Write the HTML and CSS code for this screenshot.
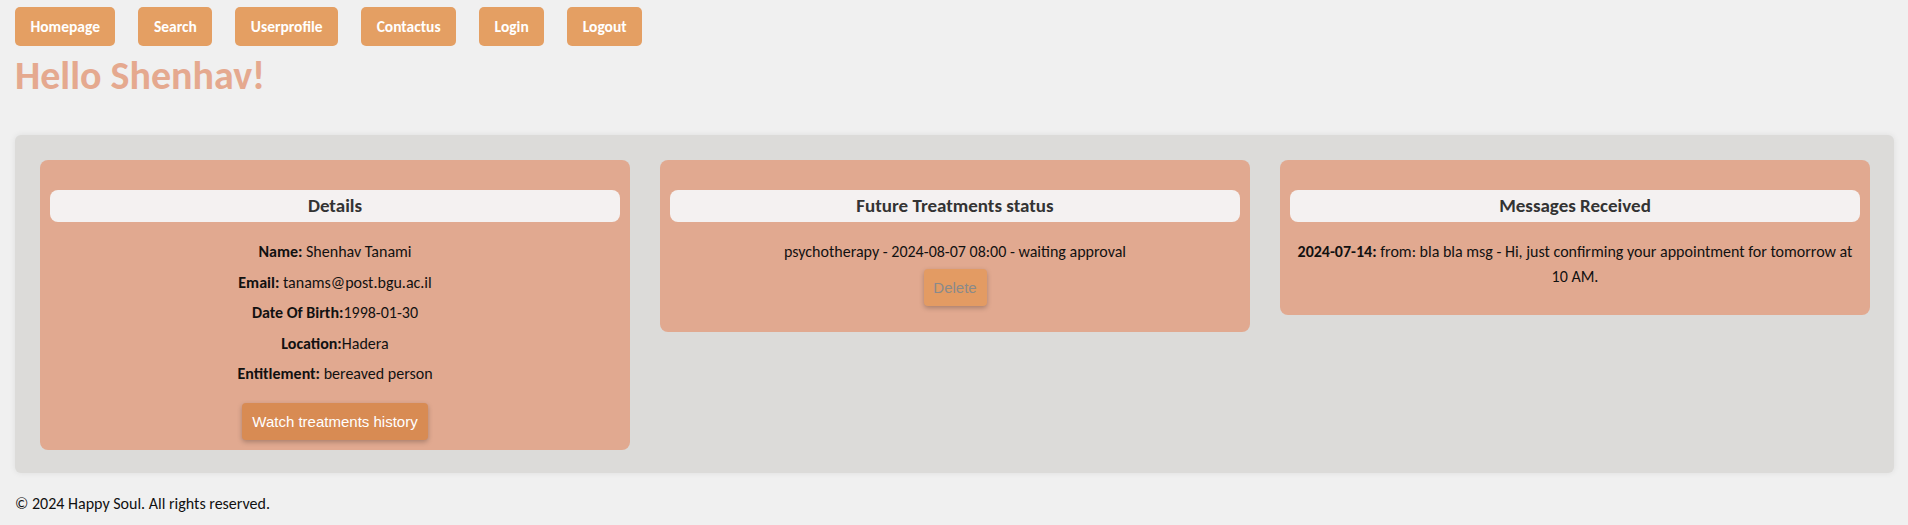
FILE: index.html
```html
<!DOCTYPE html>
<html lang="en">
<head>
<meta charset="utf-8">
<title>Happy Soul - User Profile</title>
<link rel="stylesheet" href="styles.css">
</head>
<body>
<nav class="nav">
  <a class="nav-btn" href="#">Homepage</a>
  <a class="nav-btn" href="#">Search</a>
  <a class="nav-btn" href="#">Userprofile</a>
  <a class="nav-btn" href="#">Contactus</a>
  <a class="nav-btn" href="#">Login</a>
  <a class="nav-btn" href="#">Logout</a>
</nav>
<h1 class="greeting">Hello Shenhav!</h1>
<main class="panel">
  <section class="card">
    <h3 class="card-title">Details</h3>
    <div class="details">
      <p><b>Name:</b> Shenhav Tanami</p>
      <p><b>Email:</b> tanams@post.bgu.ac.il</p>
      <p><b>Date Of Birth:</b>1998-01-30</p>
      <p><b>Location:</b>Hadera</p>
      <p><b>Entitlement:</b> bereaved person</p>
    </div>
    <button class="watch-btn">Watch treatments history</button>
  </section>
  <section class="card">
    <h3 class="card-title">Future Treatments status</h3>
    <p class="card-text">psychotherapy - 2024-08-07 08:00 - waiting approval</p>
    <button class="delete-btn" disabled>Delete</button>
  </section>
  <section class="card">
    <h3 class="card-title">Messages Received</h3>
    <p class="card-text"><b>2024-07-14:</b> from: bla bla msg - Hi, just confirming your appointment for tomorrow at 10 AM.</p>
  </section>
</main>
<footer class="footer">© 2024 Happy Soul. All rights reserved.</footer>
</body>
</html>
```

FILE: styles.css
```css
html, body {
  margin: 0;
  padding: 0;
}
body {
  background: #f0f0f0;
  font-family: Carlito, Lato, "Noto Sans", sans-serif;
  color: #111;
}
.nav {
  display: flex;
  gap: 23px;
  padding: 7px 15px 0;
}
.nav-btn {
  display: flex;
  align-items: center;
  height: 39px;
  padding: 0 15.5px;
  background: #e49f63;
  color: #fff;
  border-radius: 5px;
  text-decoration: none;
  font-size: 15.5px;
  font-weight: bold;
}
.greeting {
  margin: 6px 15px 0;
  font-size: 40px;
  line-height: 48px;
  color: #e5a98f;
  font-weight: bold;
}
.panel {
  margin: 35px 14px 0 15px;
  padding: 25px 24px 23px 25px;
  background: #dcdbd9;
  border-radius: 6px;
  box-shadow: 0 0 6px rgba(0,0,0,0.08);
  display: flex;
  gap: 30px;
  align-items: flex-start;
}
.card {
  flex: 1;
  background: #e1a990;
  border-radius: 8px;
  padding: 10px;
  text-align: center;
}
.card-title {
  margin: 20px 0 0;
  background: #f4f1f1;
  border-radius: 8px;
  height: 32px;
  line-height: 32px;
  font-size: 19px;
  font-weight: bold;
  color: #333;
}
.details {
  padding-top: 10px;
}
.details p {
  margin: 10px 0;
  font-size: 16px;
  line-height: 20.5px;
}
.details p:last-child {
  margin-bottom: 9px;
}
.card-text {
  margin: 16.5px 0;
  font-size: 16px;
  line-height: 25px;
}
.watch-btn {
  margin-top: 9px;
  height: 37px;
  padding: 0 10px;
  border: none;
  border-radius: 4px;
  background: #d88b53;
  color: #fff;
  font-family: "Liberation Sans", Arial, sans-serif;
  font-size: 15px;
  box-shadow: 0 2px 5px rgba(0,0,0,0.25);
}
.delete-btn {
  display: block;
  margin: -11.5px auto 16px;
  height: 37px;
  width: 63px;
  padding: 0;
  border: none;
  border-radius: 4px;
  background: #e39b63;
  color: #8a8a8a;
  font-family: "Liberation Sans", Arial, sans-serif;
  font-size: 15px;
  box-shadow: 0 2px 5px rgba(0,0,0,0.25);
}
.footer {
  padding: 21px 15px 0;
  font-size: 16px;
}
```
